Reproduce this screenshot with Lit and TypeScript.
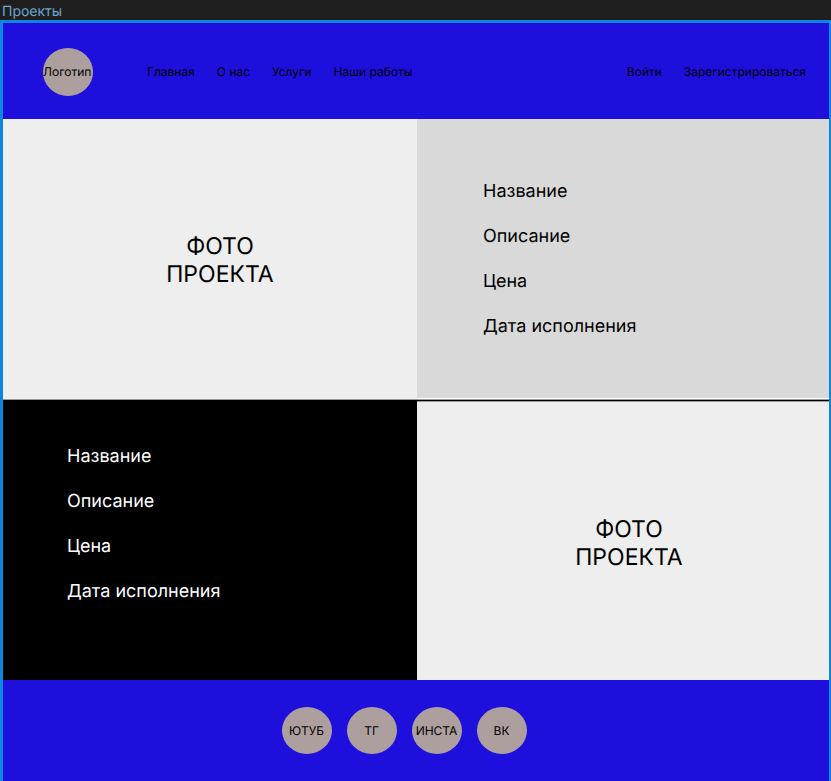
import { LitElement, html, css } from "lit";
import { customElement } from "lit/decorators.js";

const SECTIONS = ["Главная", "О нас", "Услуги", "Наши работы"];
const ACCOUNT = ["Войти", "Зарегистрироваться"];
const DETAILS = ["Название", "Описание", "Цена", "Дата исполнения"];
const SOCIALS = ["ЮТУБ", "ТГ", "ИНСТА", "ВК"];

@customElement("app-root")
export class AppRoot extends LitElement {
  static styles = css`
    :host {
      display: flex;
      flex-direction: column;
      min-height: 100vh;
      background: #1e1e1e;
      color: #000;
      font-family: Inter, "Noto Sans", sans-serif;
      font-size: 12px;
      line-height: 16px;
      text-rendering: geometricPrecision;
    }
    * {
      box-sizing: border-box;
    }
    a {
      color: inherit;
      text-decoration: none;
      white-space: nowrap;
    }
    .caption {
      height: 20px;
      padding: 4px 2px 0;
      color: #6ea6d0;
      font-size: 14px;
    }
    .frame {
      flex: 1;
      display: flex;
      flex-direction: column;
      border: solid #0d86e0;
      border-width: 3px 2px 0 3px;
      background: #1e0fdc;
    }
    .header {
      display: flex;
      align-items: center;
      padding: 25px 23px 23px 40px;
    }
    .disc {
      display: flex;
      align-items: center;
      justify-content: center;
      width: 50px;
      height: 47px;
      border-radius: 50%;
      background: #ae9f9f;
    }
    .logo {
      justify-content: flex-start;
      height: 48px;
      margin-right: 54px;
    }
    .links {
      display: flex;
      gap: 22px;
    }
    .account {
      margin-left: auto;
    }
    .row {
      display: grid;
      grid-template-columns: 207fr 206fr;
      min-height: 280px;
    }
    .photo {
      display: flex;
      align-items: center;
      justify-content: center;
      padding: 2px 0 0 20px;
      background: #eeeeee;
      font-size: 23px;
      line-height: 28px;
      text-align: center;
    }
    .details {
      display: flex;
      flex-direction: column;
      gap: 21px;
      margin: 0;
      padding: 61px 64px 0;
      list-style: none;
      background: #000;
      color: #fff;
      font-size: 18px;
      line-height: 24px;
    }
    .light {
      padding-left: 66px;
      background: #d9d9d9;
      border-bottom: 1px solid #fff;
      color: #000;
    }
    .first {
      min-height: 281px;
      border-bottom: 1px solid #999;
    }
    .second {
      border-top: 1px solid #000;
    }
    .second .photo {
      padding: 4px 0 0 12px;
      border-top: 1px solid #999;
    }
    .second .details {
      padding-top: 44px;
    }
    .footer {
      display: flex;
      justify-content: center;
      gap: 15px;
      padding: 27px 24px 27px 0;
    }
  `;

  private details(tone: string) {
    return html`<ul class="details ${tone}">
      ${DETAILS.map((d) => html`<li>${d}</li>`)}
    </ul>`;
  }

  private photo() {
    return html`<div class="photo">ФОТО<br />ПРОЕКТА</div>`;
  }

  render() {
    return html`
      <div class="caption">Проекты</div>
      <div class="frame">
        <header class="header">
          <a class="disc logo" href="#">Логотип</a>
          <nav class="links">
            ${SECTIONS.map((s) => html`<a href="#">${s}</a>`)}
          </nav>
          <nav class="links account">
            ${ACCOUNT.map((s) => html`<a href="#">${s}</a>`)}
          </nav>
        </header>
        <main>
          <section class="row first">${this.photo()}${this.details("light")}</section>
          <section class="row second">${this.details("dark")}${this.photo()}</section>
        </main>
        <footer class="footer">
          ${SOCIALS.map((s) => html`<a class="disc" href="#">${s}</a>`)}
        </footer>
      </div>
    `;
  }
}
